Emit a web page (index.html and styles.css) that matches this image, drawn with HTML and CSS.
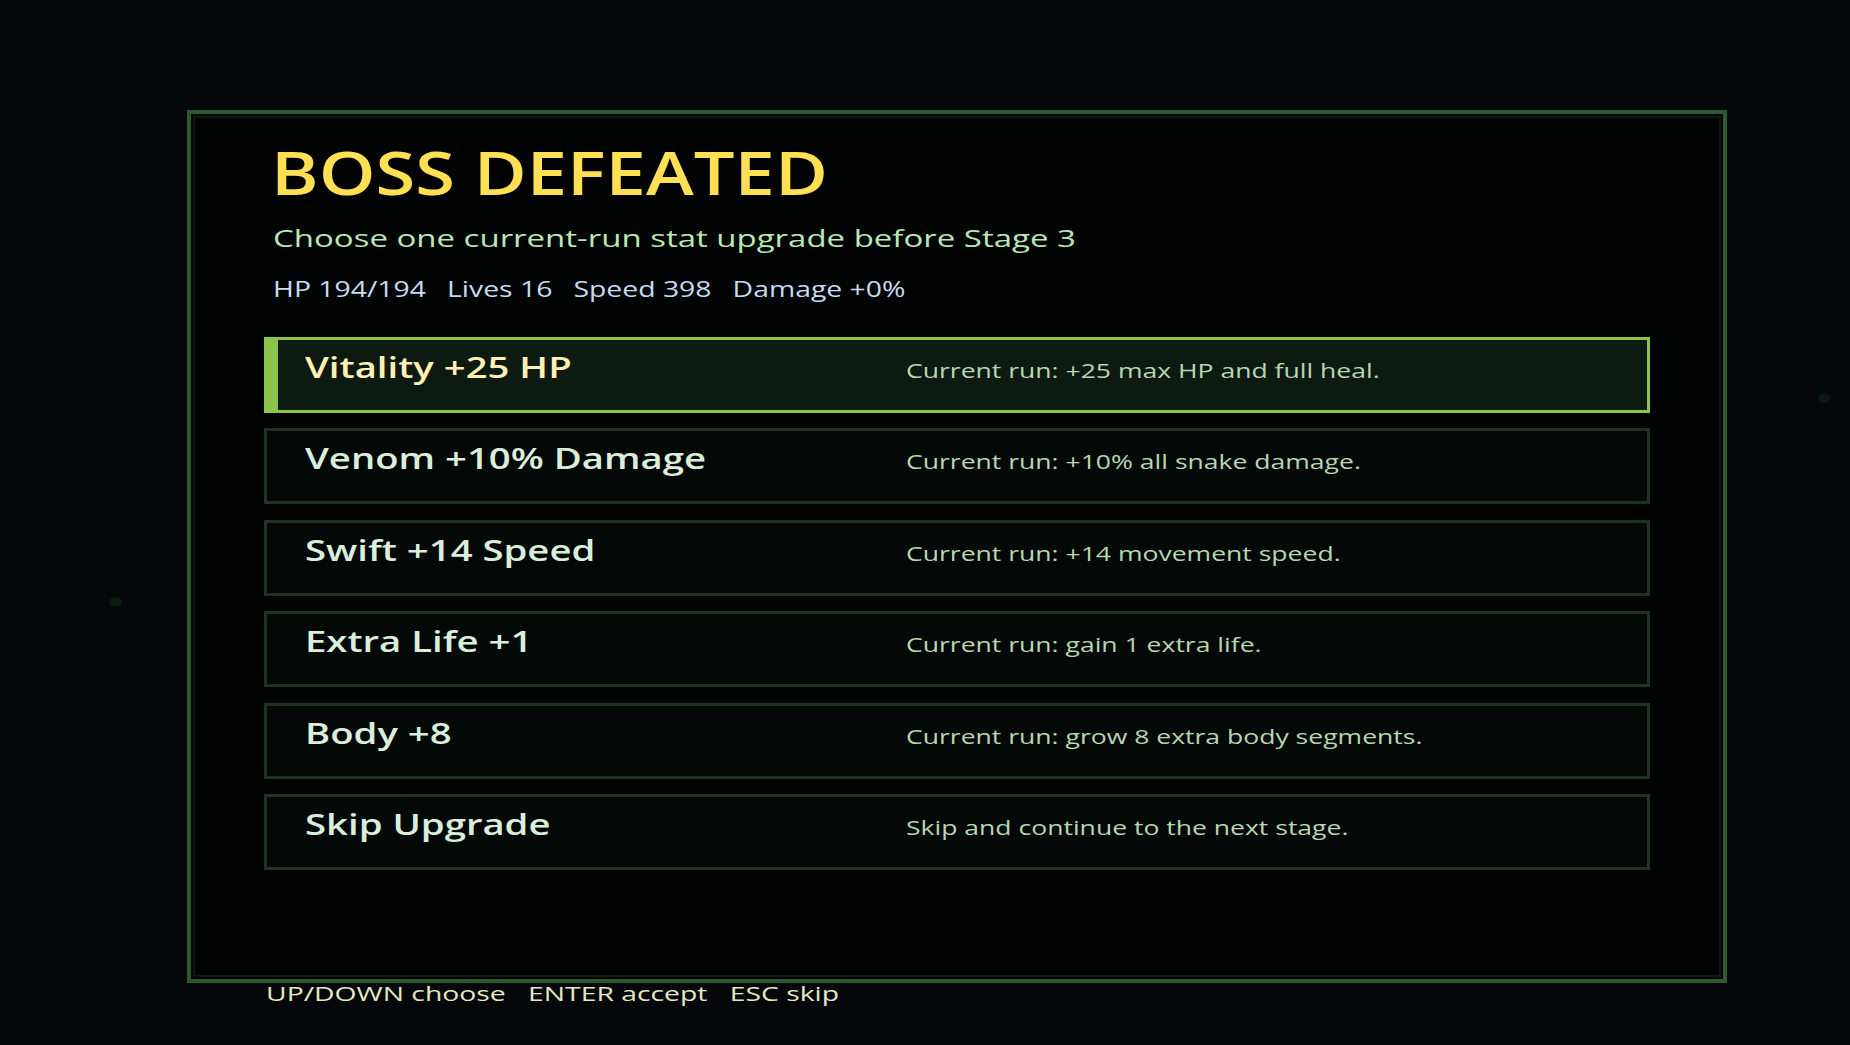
FILE: index.html
```html
<!DOCTYPE html>
<html lang="en">
<head>
<meta charset="utf-8">
<title>Boss Defeated</title>
<link rel="stylesheet" href="styles.css">
</head>
<body>
<div class="screen">
  <span class="dot dot-left"></span>
  <span class="dot dot-right"></span>
  <div class="frame">
    <div class="panel">
      <header class="head">
        <h1 class="title">BOSS DEFEATED</h1>
        <p class="subtitle">Choose one current-run stat upgrade before Stage 3</p>
        <div class="stats">
          <span>HP 194/194</span>
          <span>Lives 16</span>
          <span>Speed 398</span>
          <span>Damage +0%</span>
        </div>
      </header>
      <ul class="options">
        <li class="option selected"><span class="opt-name">Vitality +25 HP</span><span class="opt-desc">Current run: +25 max HP and full heal.</span></li>
        <li class="option"><span class="opt-name">Venom +10% Damage</span><span class="opt-desc">Current run: +10% all snake damage.</span></li>
        <li class="option"><span class="opt-name">Swift +14 Speed</span><span class="opt-desc">Current run: +14 movement speed.</span></li>
        <li class="option"><span class="opt-name">Extra Life +1</span><span class="opt-desc">Current run: gain 1 extra life.</span></li>
        <li class="option"><span class="opt-name">Body +8</span><span class="opt-desc">Current run: grow 8 extra body segments.</span></li>
        <li class="option"><span class="opt-name">Skip Upgrade</span><span class="opt-desc">Skip and continue to the next stage.</span></li>
      </ul>
    </div>
  </div>
  <div class="footer">
    <span>UP/DOWN choose</span>
    <span>ENTER accept</span>
    <span>ESC skip</span>
  </div>
</div>
</body>
</html>
```

FILE: styles.css
```css
html, body {
  margin: 0;
  padding: 0;
  height: 100%;
}

body {
  background: #05070b;
  font-family: "Open Sans", "Noto Sans", sans-serif;
  overflow: hidden;
}

.screen {
  position: relative;
  width: 1850px;
  height: 1045px;
  box-sizing: border-box;
  padding: 110px 0 0 187px;
  overflow: hidden;
}

.dot {
  position: absolute;
  width: 13px;
  height: 10px;
  border-radius: 50%;
  background: #0b1a0f;
}

.dot-left {
  left: 109px;
  top: 597px;
}

.dot-right {
  left: 1818px;
  top: 393px;
}

.frame {
  width: 1540px;
  height: 873px;
  box-sizing: border-box;
  border: 4px solid #2b5a30;
  padding: 2px;
  background: #020403;
}

.panel {
  height: 100%;
  box-sizing: border-box;
  border: 2px solid #121612;
  padding: 25px 69px 0 69px;
}

.head {
  padding-left: 9px;
}

.title {
  width: max-content;
  margin: 0 0 0 -2px;
  font-size: 59px;
  line-height: 59px;
  font-weight: 600;
  color: #ffe055;
  transform: scaleX(1.225);
  transform-origin: 0 50%;
}

.subtitle {
  width: max-content;
  margin: 24px 0 0 0;
  font-size: 24px;
  line-height: 24px;
  font-weight: 500;
  color: #b9e8b4;
  transform: scaleX(1.374);
  transform-origin: 0 50%;
}

.stats {
  width: max-content;
  display: flex;
  gap: 15.6px;
  margin-top: 29px;
  font-size: 21px;
  line-height: 21px;
  font-weight: 500;
  color: #c5dcf2;
  transform: scaleX(1.35);
  transform-origin: 0 50%;
}

.options {
  list-style: none;
  margin: 37px 0 0 0;
  padding: 0;
  display: flex;
  flex-direction: column;
  gap: 15.4px;
}

.option {
  height: 76px;
  box-sizing: border-box;
  border: 3px solid #1e3322;
  background: #040806;
  padding: 13px 20px 0 38px;
  display: grid;
  grid-template-columns: 601px 1fr;
  align-items: baseline;
}

.option.selected {
  border-color: #8cc34b;
  background: #0d1a12;
  box-shadow: inset 11px 0 0 0 #8cc34b;
}

.opt-name {
  justify-self: start;
  font-size: 28px;
  line-height: 28px;
  font-weight: 600;
  color: #d9efdc;
  transform: scaleX(1.367);
  transform-origin: 0 50%;
}

.option.selected .opt-name {
  color: #fff1b3;
}

.opt-desc {
  justify-self: start;
  font-size: 20px;
  line-height: 20px;
  font-weight: 500;
  color: #b6d8b0;
  transform: scaleX(1.327);
  transform-origin: 0 50%;
}

.footer {
  width: max-content;
  display: flex;
  gap: 15.8px;
  margin: 1px 0 0 79px;
  font-size: 20px;
  line-height: 20px;
  font-weight: 500;
  color: #e3e9c0;
  transform: scaleX(1.415);
  transform-origin: 0 50%;
}
```
